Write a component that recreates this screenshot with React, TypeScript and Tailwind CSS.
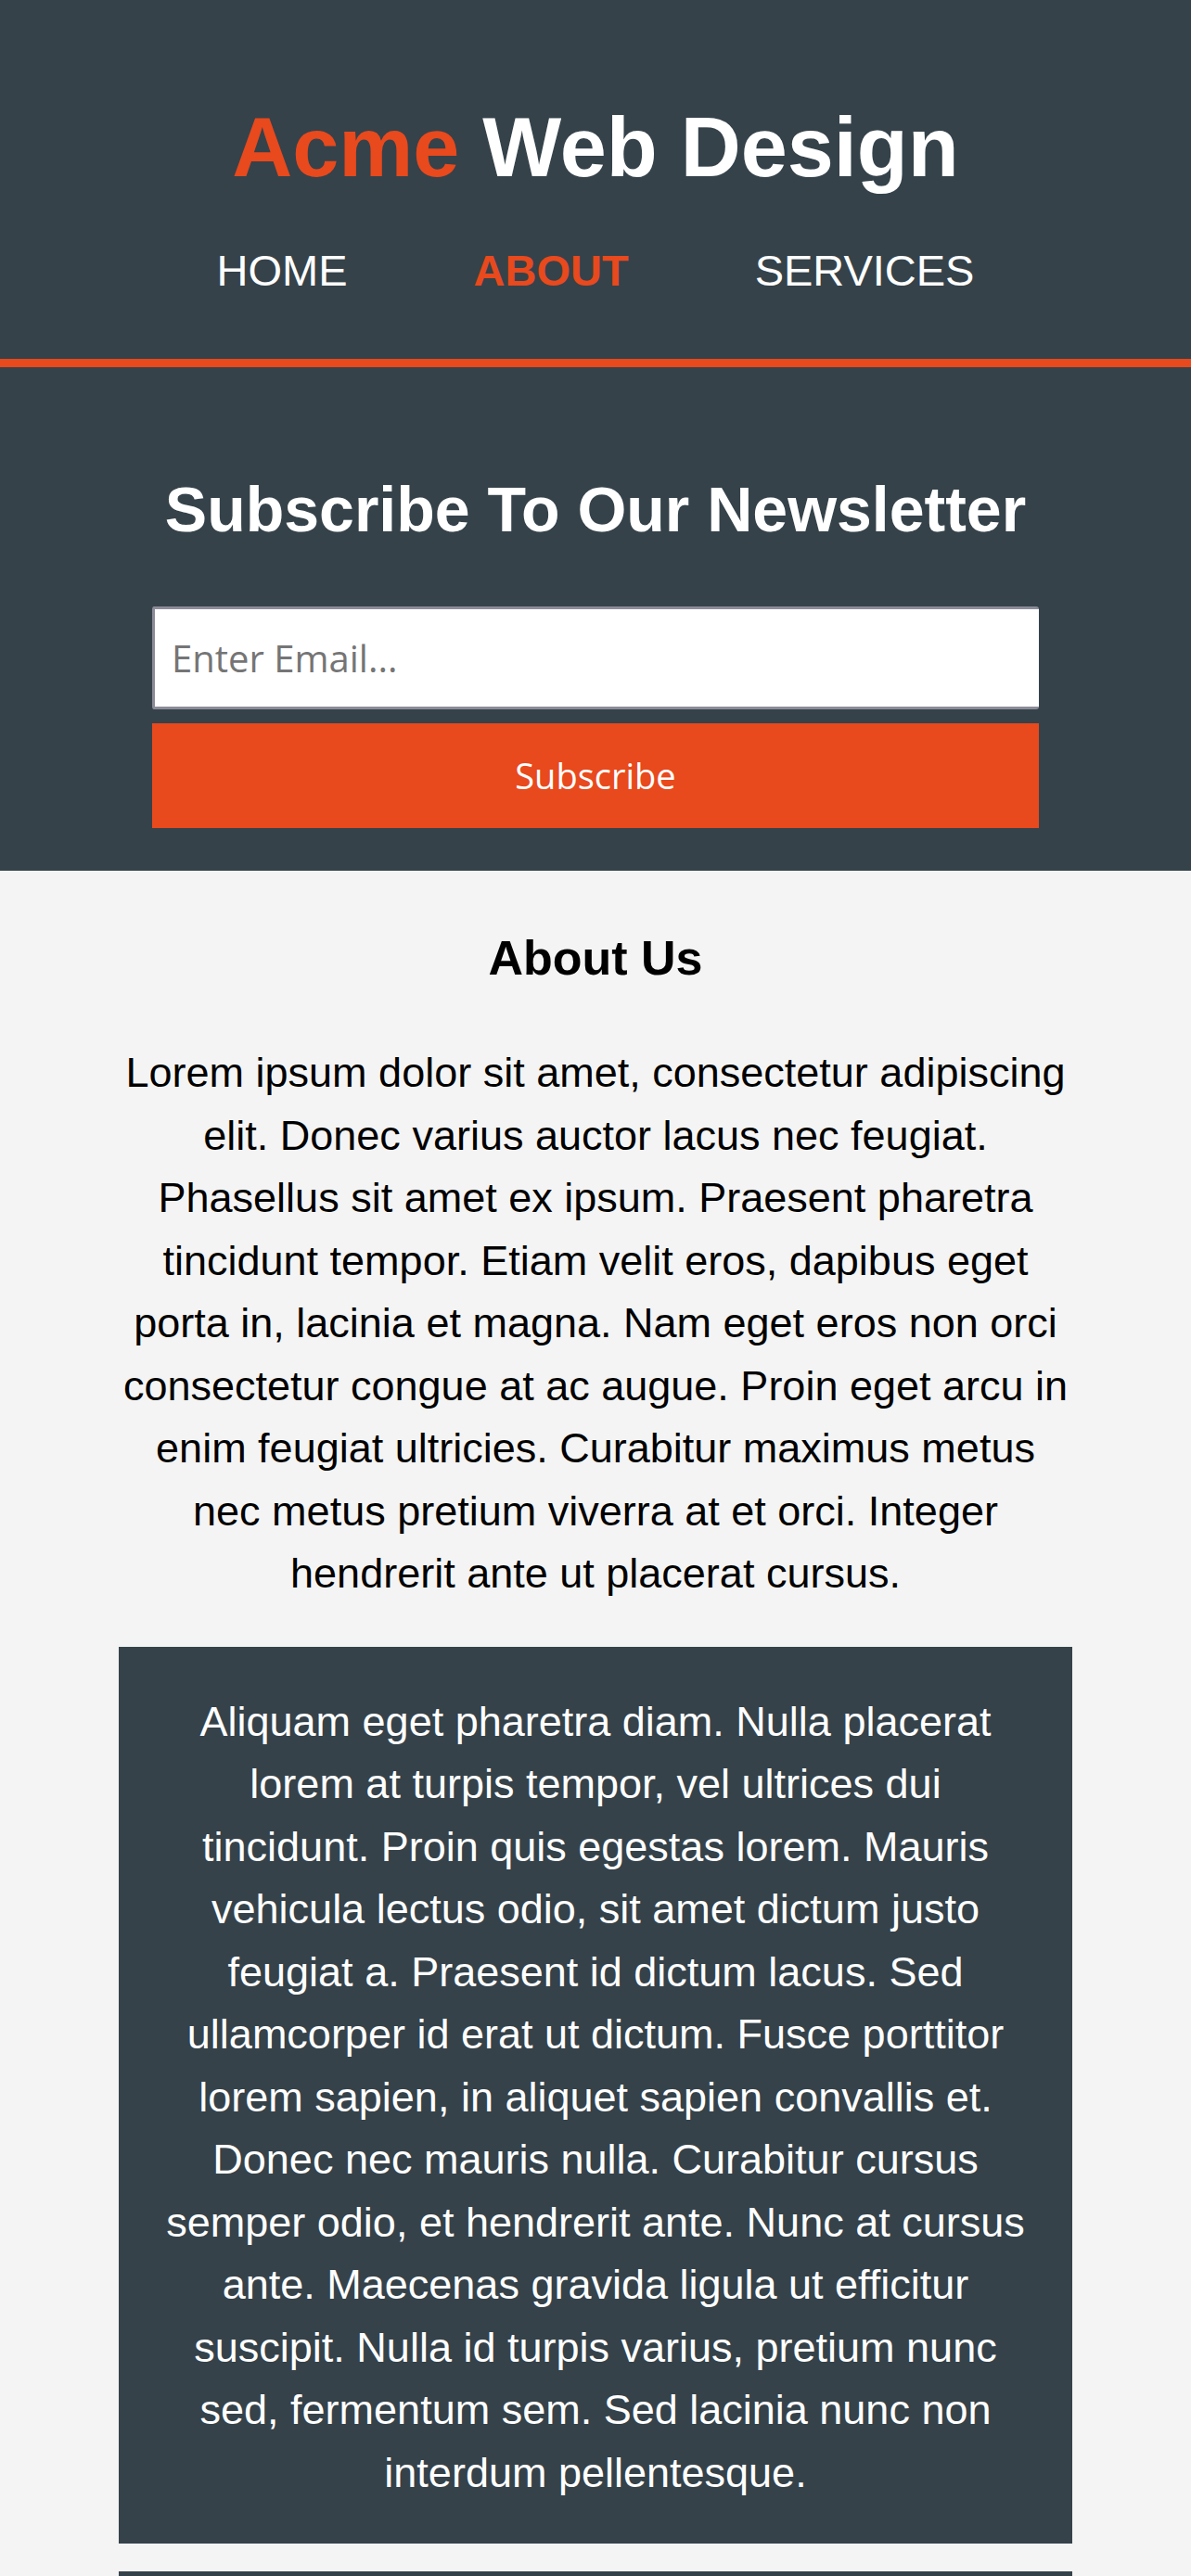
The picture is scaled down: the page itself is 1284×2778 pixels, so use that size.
import * as React from 'react';

const aboutText =
  'Lorem ipsum dolor sit amet, consectetur adipiscing elit. Donec varius auctor lacus nec feugiat. Phasellus sit amet ex ipsum. Praesent pharetra tincidunt tempor. Etiam velit eros, dapibus eget porta in, lacinia et magna. Nam eget eros non orci consectetur congue at ac augue. Proin eget arcu in enim feugiat ultricies. Curabitur maximus metus nec metus pretium viverra at et orci. Integer hendrerit ante ut placerat cursus.';

const boxText =
  'Aliquam eget pharetra diam. Nulla placerat lorem at turpis tempor, vel ultrices dui tincidunt. Proin quis egestas lorem. Mauris vehicula lectus odio, sit amet dictum justo feugiat a. Praesent id dictum lacus. Sed ullamcorper id erat ut dictum. Fusce porttitor lorem sapien, in aliquet sapien convallis et. Donec nec mauris nulla. Curabitur cursus semper odio, et hendrerit ante. Nunc at cursus ante. Maecenas gravida ligula ut efficitur suscipit. Nulla id turpis varius, pretium nunc sed, fermentum sem. Sed lacinia nunc non interdum pellentesque.';

const navItems = [
  { label: 'HOME', active: false },
  { label: 'ABOUT', active: true },
  { label: 'SERVICES', active: false },
];

export default function App() {
  return (
    <div className="min-h-screen bg-[#f4f4f4] font-['Liberation_Sans',Arial,sans-serif]">
      {/* Header */}
      <header className="border-b-[9px] border-[#e8491d] bg-[#35424a] pb-[68px] pt-[108px] text-center text-white">
        <h1 className="text-[90px] font-bold leading-[103px]">
          <span className="text-[#e8491d]">Acme</span> Web Design
        </h1>
        <nav className="mt-[54px] flex justify-center gap-[136px] text-[47px] leading-[54px]">
          {navItems.map((item) => (
            <a
              key={item.label}
              href="#"
              className={item.active ? 'font-bold text-[#e8491d]' : 'text-white'}
            >
              {item.label}
            </a>
          ))}
        </nav>
      </header>

      {/* Newsletter */}
      <section className="bg-[#35424a] pb-[46px] pt-[114px] text-center text-white">
        <h2 className="text-[68px] font-bold leading-[78px]">Subscribe To Our Newsletter</h2>
        <form className="mx-auto mt-[66px] flex w-[956px] flex-col gap-[15px]">
          <input
            type="email"
            placeholder="Enter Email..."
            className="h-[111px] w-full rounded-[3px] border-[3px] border-r-0 border-[#8b8b98] bg-white pl-[18px] font-['Open_Sans',sans-serif] text-[40px] text-black placeholder:text-[#757575]"
          />
          <button
            type="button"
            className="h-[113px] w-full bg-[#e8491d] font-['Open_Sans',sans-serif] text-[38px] text-white"
          >
            Subscribe
          </button>
        </form>
      </section>

      {/* About */}
      <section className="mx-auto w-[1028px] pt-[64px] text-center">
        <h2 className="text-[52px] font-bold leading-[60px] text-black">About Us</h2>
        <p className="mt-[60px] text-[45px] leading-[1.5] text-black">{aboutText}</p>
        <div className="mt-[45px] bg-[#35424a] px-[46px] pb-[43px] pt-[47px] text-[45px] leading-[1.5] text-white">
          <p>{boxText}</p>
        </div>
        <div className="mt-[30px] h-[300px] bg-[#35424a]" />
      </section>
    </div>
  );
}
